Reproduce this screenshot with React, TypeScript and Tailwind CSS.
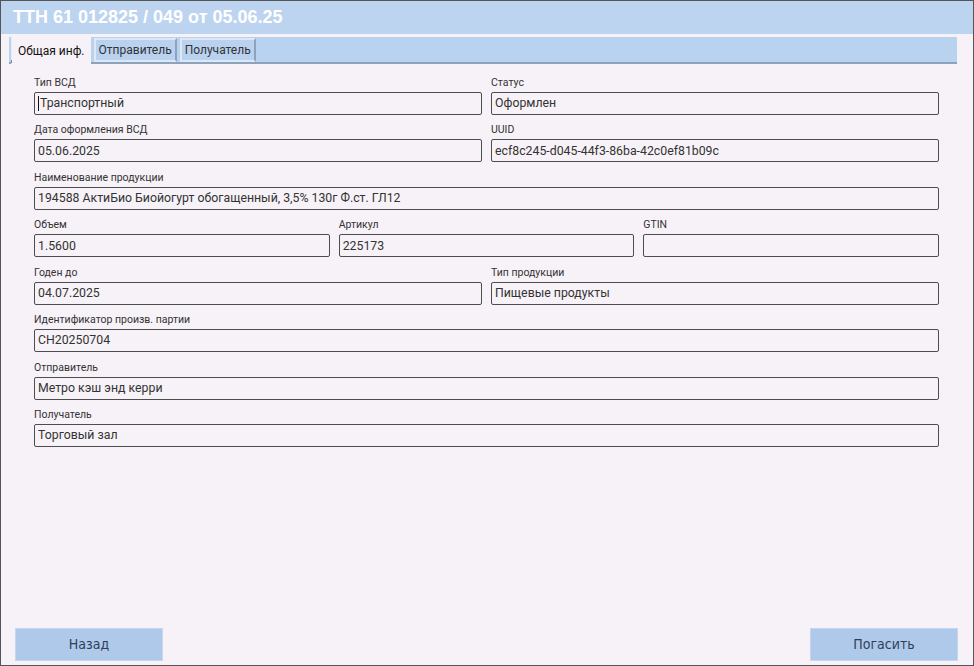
import React from "react";

const font = { fontFamily: 'Roboto, "Liberation Sans", Arial, sans-serif' };

function Field({ label, value, caret }: { label: string; value: string; caret?: boolean }) {
  return (
    <div className="flex flex-col min-w-0">
      <div className="h-[14px] mb-[2px] text-[10.5px] leading-[14px] text-[#333]">{label}</div>
      <div className="h-[23px] rounded-[2px] border border-[#4d4d4d] bg-[#f7f2f7] pl-[3px] flex items-center text-[12.3px] text-[#333] whitespace-nowrap overflow-hidden">
        {caret && <span className="inline-block w-[1px] h-[15px] bg-[#111] mr-[1px]" />}
        {value}
      </div>
    </div>
  );
}

function Tab({ label, active }: { label: string; active?: boolean }) {
  if (active) {
    return (
      <div className="relative h-[27px] px-[6px] flex items-center bg-[#f7f2f7] border-l border-[#e4ecf7] text-[12px] text-[#111] -mb-[2px] ml-[2px]">
        {label}
        <span className="absolute left-[-1px] bottom-[1px] w-[1px] h-[3px] bg-[#7a8aa0]" />
      </div>
    );
  }
  return (
    <div className="h-[24px] mt-[1px] px-[3px] flex items-center bg-[#b9d2f0] border-2 border-[#dde8f6] border-r-[#8ea2bb] text-[12px] text-[#333] ml-[3px]">
      {label}
    </div>
  );
}

export default function App() {
  return (
    <div className="h-screen w-full flex flex-col border border-[#555] bg-[#f7f2f7] overflow-hidden" style={font}>
      <header className="h-[33px] shrink-0 bg-[#bcd4f0] flex items-center pl-[12px]">
        <h1
          className="text-[18px] font-bold text-white"
          style={{ fontFamily: '"Liberation Sans", Arial, sans-serif' }}
        >
          ТТН 61 012825 / 049 от 05.06.25
        </h1>
      </header>

      <div className="mt-[3px] ml-[8px] mr-[16px] h-[27px] bg-[#b9d2f0] border-b-2 border-[#8ea2bb] flex items-start">
        <Tab label="Общая инф." active />
        <Tab label="Отправитель" />
        <Tab label="Получатель" />
      </div>

      <main className="flex-1 pt-[12px] pl-[33px] pr-[34px] flex flex-col gap-[8.43px]">
        <div className="grid grid-cols-2 gap-x-[9px]">
          <Field label="Тип ВСД" value="Транспортный" caret />
          <Field label="Статус" value="Оформлен" />
        </div>
        <div className="grid grid-cols-2 gap-x-[9px]">
          <Field label="Дата оформления ВСД" value="05.06.2025" />
          <Field label="UUID" value="ecf8c245-d045-44f3-86ba-42c0ef81b09c" />
        </div>
        <Field label="Наименование продукции" value="194588 АктиБио Биойогурт обогащенный, 3,5% 130г Ф.ст. ГЛ12" />
        <div className="grid grid-cols-3 gap-x-[9px]">
          <Field label="Объем" value="1.5600" />
          <Field label="Артикул" value="225173" />
          <Field label="GTIN" value="" />
        </div>
        <div className="grid grid-cols-2 gap-x-[9px]">
          <Field label="Годен до" value="04.07.2025" />
          <Field label="Тип продукции" value="Пищевые продукты" />
        </div>
        <Field label="Идентификатор произв. партии" value="CH20250704" />
        <Field label="Отправитель" value="Метро кэш энд керри" />
        <Field label="Получатель" value="Торговый зал" />
      </main>

      <footer className="shrink-0 flex justify-between pl-[14px] pr-[15px] pb-[4px]">
        {["Назад", "Погасить"].map((t) => (
          <button
            key={t}
            className="w-[148px] h-[33px] bg-[#aec9e9] border border-[#c4d7ef] text-[14px] text-[#2e3f5c]"
            style={{ fontFamily: '"DejaVu Sans Condensed", "Liberation Sans", sans-serif' }}
          >
            {t}
          </button>
        ))}
      </footer>
    </div>
  );
}
